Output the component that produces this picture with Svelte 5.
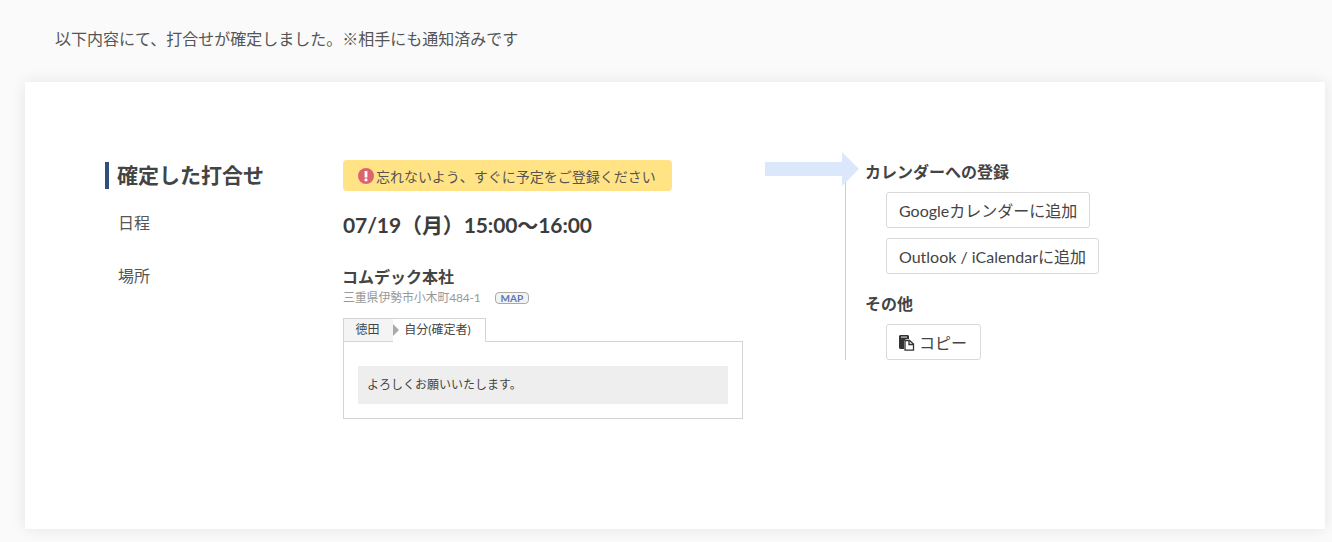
<script>
  const buttons = ['Googleカレンダーに追加', 'Outlook / iCalendarに追加'];
</script>

<div class="page">
  <p class="lead">以下内容にて、打合せが確定しました。※相手にも通知済みです</p>
  <main class="card">
    <section class="left">
      <div class="row head">
        <h2 class="title">確定した打合せ</h2>
        <div class="alert">
          <svg class="alert-ico" viewBox="0 0 16 16" aria-hidden="true">
            <circle cx="8" cy="8" r="8" fill="#dc6470" />
            <rect x="6.6" y="3" width="2.8" height="6.6" rx=".6" fill="#fff" />
            <rect x="6.6" y="10.6" width="2.8" height="2.6" rx=".6" fill="#fff" />
          </svg>
          <span>忘れないよう、すぐに予定をご登録ください</span>
        </div>
      </div>
      <div class="row date-row">
        <div class="label">日程</div>
        <div class="date">07/19（月）15:00～16:00</div>
      </div>
      <div class="row place-row">
        <div class="label">場所</div>
        <div class="place">
          <div class="place-name">コムデック本社</div>
          <div class="addr"><span class="addr-text">三重県伊勢市小木町484-1</span><span class="map">MAP</span></div>
          <div class="tabs">
            <div class="tab off">徳田<i class="tri"></i></div>
            <div class="tab on">自分(確定者)</div>
          </div>
          <div class="panel"><div class="msg">よろしくお願いいたします。</div></div>
        </div>
      </div>
    </section>
    <aside class="right">
      <div class="arrow"></div>
      <h3 class="sub first">カレンダーへの登録</h3>
      {#each buttons as b}
        <button class="btn">{b}</button>
      {/each}
      <h3 class="sub other">その他</h3>
      <button class="btn copy">
        <svg class="copy-ico" viewBox="0 0 17 17" aria-hidden="true">
          <path d="M1 2.5C1 1.7 1.7 1 2.5 1h7C10.300 1 11 1.700 11 2.500V5H8L6 7v8H2.500C1.700 15 1 14.300 1 13.500z" fill="#333" />
          <path d="M3 2.200h6V4H3z" fill="#999" />
          <path d="M7 6.500h4.500L15.500 10v6.200H7z" fill="#fff" stroke="#333" stroke-width="1.300" />
          <path d="M11 6.500V10.500h4.500" fill="none" stroke="#333" stroke-width="1.300" />
        </svg>
        <span>コピー</span>
      </button>
    </aside>
  </main>
</div>

<style>
  :global(body) {
    margin: 0;
    background: #fafafa;
    color: #444;
    font-family: Lato, "Noto Sans CJK JP", sans-serif;
  }
  .page {
    height: 542px;
    overflow: hidden;
    box-sizing: border-box;
    padding: 0 7px 0 25px;
  }
  .lead {
    margin: 0;
    padding: 29px 0 0 30px;
    height: 82px;
    box-sizing: border-box;
    font-size: 16px;
    line-height: 20px;
    color: #555;
  }
  .card {
    height: 447px;
    background: #fff;
    box-shadow: 0 0 14px rgba(0, 0, 0, .09);
    display: flex;
    box-sizing: border-box;
    padding: 78px 0 0 80px;
  }
  .left { width: 638px; flex: none; }
  .row { display: flex; }
  .head { align-items: flex-start; }
  .title {
    width: 238px;
    height: 27px;
    box-sizing: border-box;
    margin: 2px 0 0;
    flex: none;
    border-left: 4px solid #2f4f7f;
    padding-left: 8px;
    font-size: 21px;
    line-height: 25px;
    font-weight: 700;
    color: #444;
  }
  .alert {
    width: 329px;
    height: 31px;
    box-sizing: border-box;
    background: #ffe385;
    border-radius: 4px;
    padding: 0 15px;
    display: flex;
    align-items: center;
    gap: 3px;
    font-size: 14px;
    color: #555;
    white-space: nowrap;
  }
  .alert-ico { width: 16px; height: 16px; flex: none; margin-right: -1px; }
  .label {
    width: 225px;
    margin-left: 13px;
    flex: none;
    font-size: 16px;
    line-height: 22px;
    color: #555;
  }
  .date-row { margin-top: 21px; }
  .date {
    font-size: 21px;
    line-height: 26px;
    height: 28px;
    font-weight: 700;
    color: #3c3c3c;
    margin-left: 0;
    white-space: nowrap;
    letter-spacing: -.1px;
  }
  .place-row { margin-top: 25px; }
  .place { width: 400px; padding-top: 1px; }
  .place-name { font-size: 16px; line-height: 22px; font-weight: 700; color: #444; margin-left: -1px; }
  .addr {
    display: flex;
    align-items: center;
    font-size: 12px;
    line-height: 20px;
    color: #999;
  }
  .addr-text { letter-spacing: -.2px; }
  .map {
    margin-left: 14px;
    border: 1px solid #aaa;
    border-radius: 4px;
    font-size: 10px;
    line-height: 10px;
    padding: 0 5px;
    font-weight: 700;
    color: #5a78b8;
    background: #f3f3f3;
  }
  .tabs { display: flex; margin-top: 10px; height: 24px; position: relative; z-index: 1; }
  .tab {
    box-sizing: border-box;
    height: 24px;
    font-size: 12px;
    line-height: 22px;
    color: #444;
    border: 1px solid #d4d4d4;
    text-align: center;
  }
  .off {
    width: 50px;
    padding-right: 2px;
    background: #f4f4f4;
    border-right: 0;
    position: relative;
  }
  .tri {
    position: absolute;
    right: -6px;
    top: 5px;
    border-left: 6px solid #aaa;
    border-top: 6px solid transparent;
    border-bottom: 6px solid transparent;
  }
  .on { width: 93px; border-left: 0; border-bottom-color: #fff; background: #fff; padding-right: 3px; }
  .panel {
    margin-top: -1px;
    height: 78px;
    box-sizing: border-box;
    border: 1px solid #d4d4d4;
    padding: 24px 14px 0;
  }
  .msg {
    background: #eee;
    height: 38px;
    padding-left: 9px;
    font-size: 12px;
    line-height: 38px;
    color: #444;
  }
  .right {
    position: relative;
    box-sizing: border-box;
    height: 182px;
    margin-top: 18px;
    margin-left: 102px;
    width: 300px;
    border-left: 1px solid #ccc;
    padding-left: 19px;
    display: block;
  }
  .arrow {
    position: absolute;
    left: -81px;
    top: -26px;
    width: 94px;
    height: 34px;
    background: #dbe7fb;
    clip-path: polygon(0 10px, 77px 10px, 77px 0, 94px 17px, 77px 34px, 77px 24px, 0 24px);
  }
  .sub { margin: 0; font-size: 16px; font-weight: 700; line-height: 20px; color: #444; position: relative; }
  .first { margin-top: -16px; }
  .other { margin-top: 20px; margin-bottom: 10px; }
  .btn {
    display: flex;
    align-items: center;
    margin: 10px 0 0 21px;
    height: 36px;
    box-sizing: border-box;
    padding: 0 12px;
    background: #fff;
    border: 1px solid #d9d9d9;
    border-radius: 3px;
    font: inherit;
    font-size: 16px;
    line-height: 33px;
    color: #444;
    white-space: nowrap;
  }
  .copy { margin-top: 0; gap: 4px; padding: 0 13px 0 11px; }
  .copy-ico { width: 17px; height: 17px; }
</style>
